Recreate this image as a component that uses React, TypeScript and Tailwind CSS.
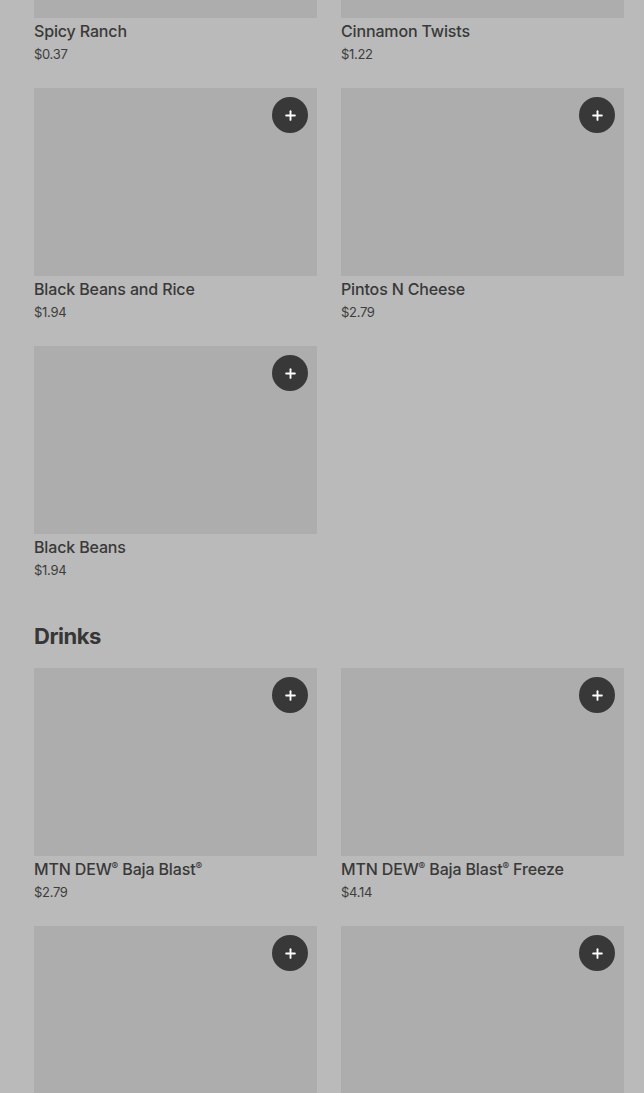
import { Plus } from "lucide-react";

interface Item {
  name?: string;
  price?: string;
}

const sides: Item[] = [
  { name: "Spicy Ranch", price: "$0.37" },
  { name: "Cinnamon Twists", price: "$1.22" },
  { name: "Black Beans and Rice", price: "$1.94" },
  { name: "Pintos N Cheese", price: "$2.79" },
  { name: "Black Beans", price: "$1.94" },
];

// last row is below the fold, only the images show
const drinks: Item[] = [
  { name: "MTN DEW® Baja Blast®", price: "$2.79" },
  { name: "MTN DEW® Baja Blast® Freeze", price: "$4.14" },
  {},
  {},
];

// shrink the ® marks like the menu does
const renderName = (name: string) =>
  name.split("®").map((part, i, arr) => (
    <span key={i}>
      {part}
      {i < arr.length - 1 && <span className="text-[10px] align-[5px] leading-none">®</span>}
    </span>
  ));

const ProductCard = ({ item }: { item: Item }) => {
  return (
    <div className="flex flex-col">
      <div className="relative h-[188px] bg-[#adadad]">
        <button
          type="button"
          className="absolute top-[9px] right-[9px] w-9 h-9 rounded-full bg-[#383838] flex items-center justify-center text-white"
        >
          <Plus className="w-[15px] h-[15px]" strokeWidth={3} />
        </button>
      </div>
      {item.name && (
        <>
          <p className="mt-[2px] text-[16px] leading-[22px] font-medium tracking-[-0.15px] text-[#393939]">
            {renderName(item.name)}
          </p>
          <p className="mt-[2px] text-[13px] leading-[20px] text-[#3d3d3d] tracking-[-0.3px]">{item.price}</p>
        </>
      )}
    </div>
  );
};

const App = () => {
  return (
    <div className="w-[644px] h-[1093px] overflow-hidden bg-[#bababa] font-['Inter',sans-serif]">
      <div className="pl-[34px] -mt-[170px]">
        <div className="grid grid-cols-[283px_283px] gap-x-6 gap-y-6">
          {sides.map((item, i) => (
            <ProductCard key={i} item={item} />
          ))}
        </div>

        <h2 className="mt-10 mb-4 text-[22px] leading-8 font-bold tracking-[-0.5px] text-[#363636]">Drinks</h2>

        <div className="grid grid-cols-[283px_283px] gap-x-6 gap-y-6">
          {drinks.map((item, i) => (
            <ProductCard key={i} item={item} />
          ))}
        </div>
      </div>
    </div>
  );
};

export default App;
